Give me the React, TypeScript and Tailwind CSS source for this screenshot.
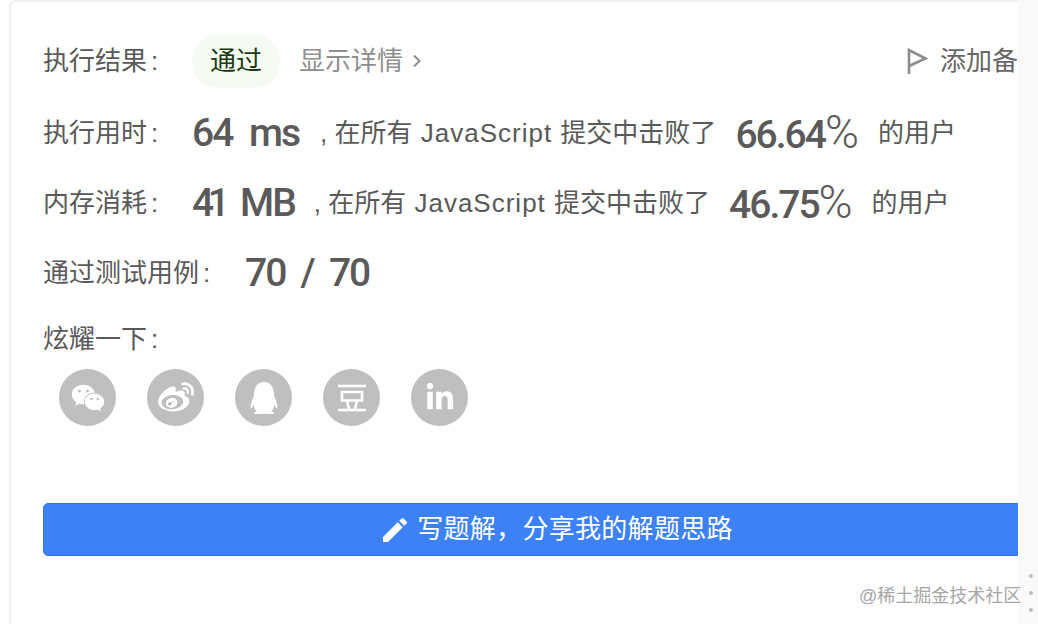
import React from "react";
import { FaWeixin, FaWeibo, FaQq, FaLinkedinIn } from "react-icons/fa";
import { MdEdit } from "react-icons/md";

const sans = "font-['Liberation_Sans','Noto_Sans_CJK_SC',sans-serif]";

function Big({ children, className = "" }: { children: React.ReactNode; className?: string }) {
  return (
    <span className={`font-['Roboto',sans-serif] font-medium text-[39px] leading-none tracking-[-2px] text-[#5a5a5a] whitespace-pre ${className}`}>
      {children}
    </span>
  );
}

function Label({ children, className = "" }: { children: React.ReactNode; className?: string }) {
  return <span className={`text-[26px] leading-none text-[#595959] whitespace-nowrap ${className}`}>{children}</span>;
}

function Colon() {
  return <span className="ml-[4px]">:</span>;
}

function StatRow({ label, value, whole, tight }: { label: string; value: React.ReactNode; whole: string; tight?: boolean }) {
  return (
    <div className="flex items-center h-[40px] whitespace-nowrap">
      <Label className="w-[149px] shrink-0">
        {label}
        <Colon />
      </Label>
      <Big className="[word-spacing:9px]">{value}</Big>
      <span className={`${tight ? "ml-[19px]" : "ml-[21px]"} text-[26px] leading-none text-[#595959] whitespace-pre`}>
        , 在所有 <span className="mx-[1px] tracking-[1px]">JavaScript</span> 提交中击败了
      </span>
      <Big className="ml-[19px] pb-[3px]">
        {whole}
        <span className="font-light text-[46px] tracking-normal">%</span>
      </Big>
      <span className="ml-[19px] text-[26px] leading-none text-[#595959]">的用户</span>
    </div>
  );
}

function Social({ children }: { children: React.ReactNode }) {
  return (
    <div className="w-[57px] h-[57px] rounded-full bg-[#bfbfbf] flex items-center justify-center text-white shrink-0">
      {children}
    </div>
  );
}

export default function App() {
  return (
    <div className={`relative w-[1038px] h-[624px] overflow-hidden bg-[#f9f9f9] ${sans}`}>
      <div className="flex h-full">
        <div className="w-[1018px] shrink-0 h-full bg-white pl-[9px]">
          <div className="h-full border-l-2 border-t-2 border-[#f0f0f0] rounded-tl-[6px] pl-[32px] pt-[32px] overflow-hidden">
            <div className="flex items-center h-[54px] w-[975px]">
              <Label className="w-[149px] shrink-0">
                执行结果
                <Colon />
              </Label>
              <span className="w-[88px] h-[54px] rounded-full bg-[#f5faf3] flex items-center justify-center text-[26px] text-[#1a3a12] shrink-0">
                通过
              </span>
              <span className="ml-[19px] text-[26px] leading-none text-[#8f8f8f]">显示详情</span>
              <svg className="ml-[9px] w-[10px] h-[16px] text-[#8f8f8f]" viewBox="0 0 10 16" fill="none" stroke="currentColor" strokeWidth="2">
                <path d="M2 2.5 L7.5 8 L2 13.5" />
              </svg>
              <svg className="ml-auto w-[22px] h-[26px] text-[#8c8c8c] shrink-0" viewBox="0 0 22 26" fill="none" stroke="currentColor" strokeWidth="2.6">
                <path d="M3 26 V2 L19.5 10.5 L3 18" />
              </svg>
              <span className="ml-[12px] text-[26px] leading-none text-[#666] whitespace-nowrap shrink-0">添加备</span>
            </div>
            <div className="mt-[25px]">
              <StatRow label="执行用时" value="64 ms" whole="66.64" />
            </div>
            <div className="mt-[30px]">
              <StatRow
                label="内存消耗"
                tight
                value={
                  <>
                    <span className="tracking-[-6.5px]">41</span> MB
                  </>
                }
                whole="46.75"
              />
            </div>
            <div className="mt-[30px] flex items-center h-[40px] whitespace-nowrap">
              <Label className="w-[202px] shrink-0">
                通过测试用例
                <Colon />
              </Label>
              <Big className="[word-spacing:7.5px]">70 / 70</Big>
            </div>
            <div className="mt-[33px] flex items-center h-[26px]">
              <Label>
                炫耀一下
                <Colon />
              </Label>
            </div>
            <div className="mt-[17px] ml-[16px] flex gap-[31px]">
              <Social><FaWeixin size={34} /></Social>
              <Social><FaWeibo size={36} /></Social>
              <Social><FaQq size={32} /></Social>
              <Social>
                <svg viewBox="0 0 30 30" className="w-[30px] h-[30px]" fill="none" stroke="currentColor" strokeWidth="2.6">
                  <path d="M1 3 H29" />
                  <path d="M5 9 H25 V17.5 H5 Z" />
                  <path d="M10 18 L12 26 M20 18 L18 26" />
                  <path d="M1 27 H29" />
                </svg>
              </Social>
              <Social><FaLinkedinIn size={30} /></Social>
            </div>
            <button className="mt-[77px] flex items-center justify-center w-[1026px] h-[53px] rounded-[5px] bg-[#3c82f6] border border-[#3a74d8] text-white text-[26px] tracking-[0.3px] whitespace-nowrap">
              <MdEdit size={32} className="mr-[6px]" />
              {"写题解\uFF0C分享我的解题思路"}
            </button>
          </div>
        </div>
      </div>
      <div className="absolute left-[859px] top-[586px] text-[18px] leading-[20px] text-[#a6a6a6] whitespace-nowrap">@稀土掘金技术社区</div>
      <div className="absolute left-[1029px] top-[574px] flex flex-col gap-[13px]">
        <div className="w-[4px] h-[4px] rounded-full bg-[#bdbdbd]" />
        <div className="w-[4px] h-[4px] rounded-full bg-[#bdbdbd]" />
        <div className="w-[4px] h-[4px] rounded-full bg-[#bdbdbd]" />
      </div>
    </div>
  );
}
